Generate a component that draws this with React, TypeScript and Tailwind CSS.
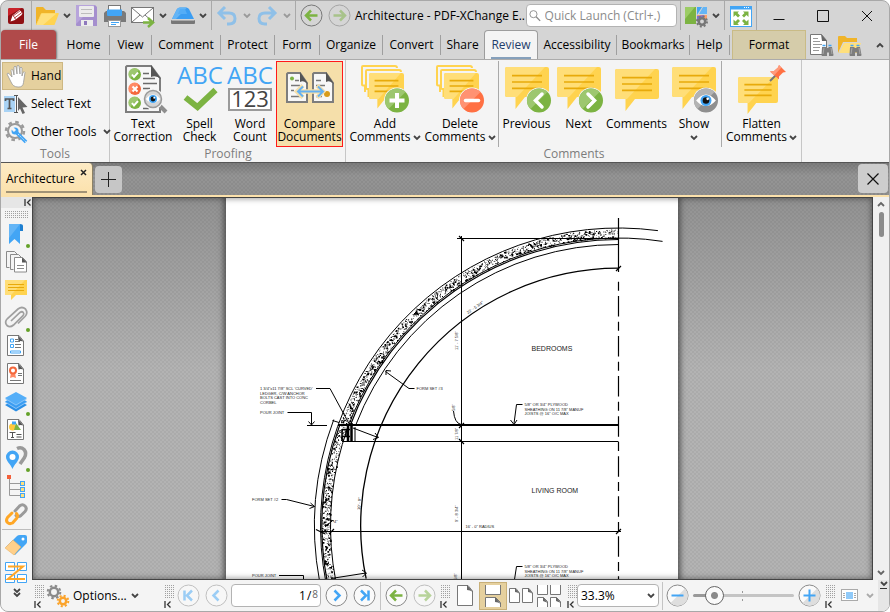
import React from 'react';
import type { ReactNode } from 'react';

const BLUE = '#42a5f5';
const LIGHT_BLUE = '#90caf9';
const GREEN = '#7cb342';
const GREY = '#9a9a9a';

/* ---------- small shared parts ---------- */

function Chevron({ color = '#444' }: { color?: string }) {
  return (
    <svg width="8" height="6" viewBox="0 0 8 6" className="shrink-0" aria-hidden="true">
      <path d="M1 1l3 3 3-3" fill="none" stroke={color} strokeWidth="1.800" />
    </svg>
  );
}

function DropButton({ label, color }: { label: string; color?: string }) {
  return (
    <button aria-label={label} className="flex h-6 w-[10px] shrink-0 items-center justify-center">
      <Chevron color={color} />
    </button>
  );
}

function Divider() {
  return <span className="w-px shrink-0 self-stretch bg-[#a9a9a9]" />;
}

function ToolButton({ label, wide, children }: { label: string; wide?: boolean; children: ReactNode }) {
  return (
    <button aria-label={label} className={`flex h-6 shrink-0 items-center justify-center ${wide ? 'w-[26px]' : 'w-6'}`}>
      {children}
    </button>
  );
}

function Icon({ size = 24, children }: { size?: number; children: ReactNode }) {
  return (
    <svg width={size} height={size} viewBox={`0 0 ${size} ${size}`} fill="none" className="shrink-0 overflow-visible" aria-hidden="true">
      {children}
    </svg>
  );
}

function CircleIcon({ kind, faded, shade = '#8a8a8a' }: { kind: string; faded?: boolean; shade?: string }) {
  const paths: Record<string, string> = {
    first: 'M7.5 6.5v10M15 6.5l-5 5 5 5',
    prev: 'M13.5 6.5l-5 5 5 5',
    next: 'M9.5 6.5l5 5-5 5',
    last: 'M8 6.5l5 5-5 5M15.5 6.5v10',
    back: 'M17.5 11.5h-11M11 6.5l-5 5 5 5',
    forward: 'M5.5 11.5h11M12 6.5l5 5-5 5',
    minus: 'M5.5 11.5h12',
    plus: 'M5.5 11.5h12M11.5 5.5v12',
  };
  const green = kind === 'back' || kind === 'forward';
  const zoom = kind === 'minus' || kind === 'plus';
  return (
    <svg width="23" height="23" viewBox="0 0 23 23" fill="none" className={faded ? 'opacity-50' : ''} aria-hidden="true">
      <circle cx="11.5" cy="11.5" r="10.5" stroke={shade} fill={green && shade !== '#8a8a8a' ? 'none' : '#fafafa'} />
      {zoom && <path d="M19 4.500A10 10 0 0 1 4.500 19Z" fill="#dedede" />}
      <path d={paths[kind]} stroke={green ? GREEN : BLUE} strokeWidth={zoom ? 2 : 2.5} />
    </svg>
  );
}

/* ---------- title bar ---------- */

function Logo() {
  return (
    <svg width="16" height="16" viewBox="0 0 16 16" aria-hidden="true">
      <rect width="16" height="16" rx="2" fill="#8f1014" />
      <path d="M2 0h12L0 8V2a2 2 0 0 1 2-2z" fill="#c8232a" />
      <path d="M2.500 13.500l2-6L11.500 2l1.500 1.500L14.500 5l-1 2-6.500 5z" fill="#fff" />
      <path d="M5 8l7.500-5.500M6.500 10l8-6M4.500 7.500q2.500 1 3 4" stroke="#a81a1f" strokeWidth=".8" fill="none" />
    </svg>
  );
}

function FolderIcon() {
  return (
    <Icon>
      <path d="M1 21V4q0-1 1-1h6l3 3h9v4H6z" fill="#f0b429" />
      <path d="M1 21l5-11.500q.4-.5 1-.5h16q1 0 .7 1l-4 10.500q-.2.5-1 .5z" fill="#ffd350" />
      <path d="M1.500 21L6.500 9.500h15L8 21z" fill="#ffe07c" />
    </Icon>
  );
}

function SaveIcon() {
  return (
    <Icon>
      <path d="M2 1h18l2 2v19H2q-1 0-1-1V2q0-1 1-1z" fill="#a58fce" />
      <path d="M1 2q0-1 1-1h18L1 20z" fill="#b7a4db" />
      <rect x="4" y="2" width="15" height="11" rx="1" fill="#ececec" />
      <path d="M6 5.500h11M6 9.500h11" stroke="#bdbdbd" />
      <rect x="6" y="16" width="12" height="6" fill="#ececec" />
      <rect x="9" y="17" width="3" height="4" fill="#8f79bd" />
    </Icon>
  );
}

function PrintIcon() {
  return (
    <Icon>
      <rect x="5.500" y="1.500" width="12" height="6" fill="#fff" stroke="#777" />
      <path d="M3 7h18l2 2v9H1V9z" fill="#7a7a7a" />
      <path d="M4 5.500h15v5.500q0 1-1 1H5q-1 0-1-1z" fill={BLUE} />
      <rect x="5.500" y="16.500" width="12" height="6" fill="#fff" stroke="#999" />
      <path d="M8 18.500h8M8 20.500h5" stroke={BLUE} />
    </Icon>
  );
}

function MailIcon() {
  return (
    <Icon>
      <rect x=".5" y="3.500" width="22" height="15" fill="#fff" stroke="#777" />
      <path d="M1 4l10.500 9L22 4M1 18l8-7M22 18l-8-7" stroke="#777" />
      <path d="M12 18.500h10M17 14l5 4.500-5 4.500" stroke={GREEN} strokeWidth="2.500" />
    </Icon>
  );
}

function ScannerIcon() {
  return (
    <Icon>
      <path d="M6 5q1-1.500 3-1.500h6q2 0 3 1.500l5 10H1z" fill="#3b9df2" />
      <path d="M6 5q1-1.500 3-1.500h7L5 15H1z" fill="#64b5f6" />
      <path d="M9 5h5l2 5H7z" fill="#54adf7" />
      <rect y="16" width="24" height="4" rx="1" fill="#777" />
      <path d="M1 16.500h22" stroke="#aaa" />
    </Icon>
  );
}

function UndoIcon({ flip }: { flip?: boolean }) {
  return (
    <svg width="22" height="22" viewBox="0 0 22 22" fill="none" className={flip ? '-scale-x-100' : ''} aria-hidden="true">
      <path d="M9 2L3 8l6 6M3.500 8H13q6 0 6 5.500T13 19h-2" stroke="#8fc0e8" strokeWidth="3" />
    </svg>
  );
}

function UiOptionsIcon() {
  return (
    <Icon>
      <path d="M1 3h11v17H1z" fill="#7cb342" />
      <path d="M1 3h10L1 15z" fill="#9ccc65" />
      <path d="M13 3h5l-5 8z" fill={BLUE} />
      <path d="M19 3h4v7h-8z" fill="#64b5f6" />
      <path d="M13 11h10v4H13z" fill="#fb9f6a" />
      <path d="M13 12l8-1-8 7z" fill="#7e6fd0" />
      <circle cx="18" cy="17.500" r="3.200" stroke="#777" strokeWidth="2.500" fill="#d5d5d5" />
      <circle cx="18" cy="17.500" r="5" stroke="#777" strokeWidth="2" strokeDasharray="1.963 1.963" />
    </Icon>
  );
}

function FullScreenIcon() {
  return (
    <Icon>
      <rect x="1.500" y="2.500" width="21" height="20" fill="#fff" stroke={BLUE} />
      <path d="M1 2h22v3.500H1z" fill={BLUE} />
      <path d="M15 3.500h6" stroke="#fff" strokeDasharray="1 1" />
      <path d="M4.500 7.500h5.500L8.500 9l2.500 2.500-2 2-2.500-2.500L4.500 13zM19.500 7.500H14l1.500 1.500L13 11.500l2 2 2.500-2.500 2 2zM4.500 21h5.500l-1.500-1.500L11 17l-2-2-2.500 2.500-2-2zM19.500 21H14l1.500-1.500L13 17l2-2 2.500 2.500 2-2z" fill={GREEN} />
    </Icon>
  );
}

function TitleBar() {
  return (
    <header className="flex h-[29px] shrink-0 items-center">
      <div className="flex min-w-0 flex-1 items-center gap-[3px] self-stretch pr-[2px]">
        <span className="flex w-[31px] shrink-0 items-center justify-center self-stretch border-r border-[#a9a9a9]">
          <Logo />
        </span>
        <ToolButton label="Open"><FolderIcon /></ToolButton>
        <DropButton label="Open recent" />
        <ToolButton label="Save"><SaveIcon /></ToolButton>
        <ToolButton label="Print" wide><PrintIcon /></ToolButton>
        <ToolButton label="Email"><MailIcon /></ToolButton>
        <DropButton label="Email options" />
        <ToolButton label="Scan"><ScannerIcon /></ToolButton>
        <DropButton label="Scan options" />
        <Divider />
        <ToolButton label="Undo"><UndoIcon /></ToolButton>
        <DropButton label="Undo history" color="#9a9a9a" />
        <ToolButton label="Redo"><UndoIcon flip /></ToolButton>
        <DropButton label="Redo history" color="#9a9a9a" />
        <Divider />
        <ToolButton label="Back"><CircleIcon kind="back" shade="#777" /></ToolButton>
        <ToolButton label="Forward" wide><CircleIcon kind="forward" shade="#777" faded /></ToolButton>
        <h1 className="min-w-0 flex-1 whitespace-nowrap">Architecture - PDF-XChange E..</h1>
        <label className="flex h-[23px] w-[151px] shrink-0 items-center gap-1 rounded-sm border border-[#b3b3b3] bg-white px-[2px]">
          <svg width="13" height="13" viewBox="0 0 13 13" fill="none" aria-hidden="true">
            <circle cx="5" cy="5" r="4" stroke="#888" />
            <path d="M8 8l4.500 4.500" stroke="#888" strokeWidth="1.500" />
          </svg>
          <input aria-label="Quick Launch" placeholder="Quick Launch (Ctrl+.)" className="w-full min-w-0 bg-transparent outline-none placeholder:text-[#8b8b8b]" />
        </label>
        <Divider />
        <ToolButton label="UI options"><UiOptionsIcon /></ToolButton>
        <DropButton label="UI options menu" />
        <Divider />
        <ToolButton label="Full screen" wide><FullScreenIcon /></ToolButton>
      </div>
      <div className="flex h-full shrink-0 border-l border-[#a9a9a9]">
        {[
          ['Minimize', 'M.5 10.500h11'],
          ['Maximize', 'M.5 1.500h11v11H.5z'],
          ['Close', 'M1 2l10 10M11 2L1 12'],
        ].map(([name, d]) => (
          <button key={name} aria-label={name} className="flex w-11 items-center justify-center">
            <svg width="12" height="13" viewBox="0 0 12 13" fill="none" stroke="#111" strokeWidth="1" aria-hidden="true"><path d={d} /></svg>
          </button>
        ))}
      </div>
    </header>
  );
}

/* ---------- ribbon tabs ---------- */

function Binoculars() {
  return (
    <g>
      <path d="M13 14h4l1 1h1l1-1h3l1.500 8q0 1-1 1H20v-3.500h-2V23h-4.500q-1 0-1-1z" fill="#7d7d7d" />
      <path d="M13.500 12.500h3M19.500 12.500h3" stroke={BLUE} strokeWidth="1.500" />
      <path d="M15 15l-1 6M22 15l1 6" stroke="#a8a8a8" />
    </g>
  );
}

const tabs: [string, string, boolean][] = [
  ['Home', 'w-[52px]', true],
  ['View', 'w-[42px]', true],
  ['Comment', 'w-[69px]', true],
  ['Protect', 'w-[54px]', true],
  ['Form', 'w-[45px]', true],
  ['Organize', 'w-[63px]', true],
  ['Convert', 'w-[58px]', true],
  ['Share', 'w-[43px]', false],
];

const tabsAfter: [string, string, boolean][] = [
  ['Accessibility', 'w-[79px]', true],
  ['Bookmarks', 'w-[73px]', true],
  ['Help', 'w-[40px]', true],
];

function RibbonTab({ name, width, line }: { name: string; width: string; line: boolean }) {
  return (
    <button role="tab" aria-selected="false" className={`flex h-[20px] shrink-0 items-center justify-center whitespace-nowrap ${width} ${line ? 'border-r border-[#9f9f9f]' : ''}`}>
      {name}
    </button>
  );
}

function RibbonTabs() {
  return (
    <nav role="tablist" className="flex h-[29px] shrink-0 items-center">
      <button role="tab" aria-selected="false" className="h-full w-[55px] shrink-0 rounded-t bg-[#b04a4a] text-white shadow-[1px_0_2px_#777]">File</button>
      <span className="w-[2px]" />
      {tabs.map(([name, width, line]) => <RibbonTab key={name} name={name} width={width} line={line} />)}
      <button role="tab" aria-selected="true" className="flex h-[30px] w-[54px] shrink-0 flex-col items-center justify-end rounded-t border border-b-0 border-[#9d9d9d] bg-[#f4f4f4] pb-px text-[#1f3d6b]">
        <span>Review</span>
        <span className="mt-1 h-[2px] w-10 bg-[#86a0bb]" />
      </button>
      {tabsAfter.map(([name, width, line]) => <RibbonTab key={name} name={name} width={width} line={line} />)}
      <span className="w-[2px]" />
      <button role="tab" aria-selected="false" className="h-full w-[74px] shrink-0 border border-b-0 border-[#c9bb86] bg-[#d5ccaa]">Format</button>
      <span className="flex-1" />
      <button aria-label="Find" className="ml-[3px]">
        <Icon>
          <path d="M1.500 1.500h11l5 6v14h-16z" fill="#fff" stroke="#777" />
          <path d="M12 1l6 7h-5z" fill="#666" />
          <path d="M4 5.500h5M4 8.500h7M4 11.500h9M4 14.500h7M4 17.500h6" stroke="#999" />
          <Binoculars />
        </Icon>
      </button>
      <button aria-label="Search" className="ml-1">
        <Icon>
          <path d="M1 20V4q0-1 1-1h6l2 2h10v4H6z" fill="#f0b429" />
          <path d="M2 20l5-10h17l-4 10z" fill="#ffe07c" />
          <Binoculars />
        </Icon>
      </button>
      <button aria-label="Collapse ribbon" className="flex w-7 items-center justify-center pl-[10px]">
        <span className="rotate-180"><Chevron /></span>
      </button>
    </nav>
  );
}

/* ---------- ribbon icons ---------- */

function Bubble({ x, y, w = 44, h = 30 }: { x: number; y: number; w?: number; h?: number }) {
  const s = w / 44;
  return (
    <g transform={`translate(${x} ${y})`}>
      <path d={`M2 0H${w - 2}q2 0 2 2V${h - 2}q0 2-2 2H${20 * s}L${10.5 * s} ${h + 12 * s}V${h}H2q-2 0-2-2V2q0-2 2-2z`} fill="#ffd34f" />
      <path d={`M2 0H${w - 4 * s}L${12 * s} ${h}H2q-2 0-2-2V2q0-2 2-2z`} fill="#ffde78" />
      <path d={`M${7 * s} ${h * 0.29}H${37 * s}M${7 * s} ${h * 0.5}H${37 * s}M${7 * s} ${h * 0.71}H${37 * s}`} stroke="#e8aa0a" strokeWidth="1.700" />
    </g>
  );
}

function BubbleStack() {
  return (
    <g>
      <path d="M4 27V20.500H2q-1 0-1-1V2q0-1 1-1h32q2 0 2 2" stroke="#ffd34f" strokeWidth="2" />
      <path d="M7.500 32V24H6q-1 0-1-1V6q0-1 1-1h32q2 0 2 2" stroke="#ffd34f" strokeWidth="2" />
      <Bubble x={8} y={8} w={35} h={26} />
    </g>
  );
}

function Badge({ kind }: { kind: 'add' | 'delete' | 'prev' | 'next' }) {
  const d = {
    add: 'M36 28v15M28.500 35.500h15',
    delete: 'M29.500 35.500h13',
    prev: 'M39 29l-6.500 6.500L39 42',
    next: 'M33 29l6.500 6.500L33 42',
  }[kind];
  const red = kind === 'delete';
  return (
    <g>
      <circle cx="36" cy="35.500" r="13" fill="#f4f4f4" />
      <circle cx="36" cy="35.500" r="12" fill={red ? '#ff7043' : '#7cb342'} />
      <path d="M44.500 27A12 12 0 1 0 27.500 44z" fill={red ? '#ff9272' : '#9dc76f'} />
      <path d={d} stroke="#fff" strokeWidth={kind === 'add' ? 4 : 3.5} strokeLinecap={kind === 'add' ? 'butt' : 'round'} />
    </g>
  );
}

function Eye({ cx, cy, s = 1 }: { cx: number; cy: number; s?: number }) {
  return (
    <g transform={`translate(${cx} ${cy}) scale(${s})`}>
      <path d="M-9 0Q0-11 9 0Q0 10-9 0z" fill="#fff" />
      <circle r="5" fill={BLUE} />
      <circle r="3" fill="#111" />
      <circle cx="1.500" cy="-1.500" r="1.200" fill="#fff" />
    </g>
  );
}

function DocSheet({ x, y, w, h, fold = 8 }: { x: number; y: number; w: number; h: number; fold?: number }) {
  return (
    <g transform={`translate(${x} ${y})`}>
      <path d={`M2 1H${w - fold}L${w - 1} ${fold + 3}V${h - 1}H1V2z`} fill="#f7f7f7" stroke="#7d7d7d" strokeWidth="2" />
      <path d={`M${w - fold} 0L${w} ${fold + 4}Q${w - fold / 2} ${fold} ${w - fold} ${fold + 2}z`} fill="#555" />
    </g>
  );
}

function TextCorrectionIcon() {
  return (
    <Icon size={48}>
      <DocSheet x={6} y={0} w={36} h={48} fold={10} />
      <path d="M24 8.500h6M24 13.500h12M24 18.500h14M24 23.500h7M24 43.500h6" stroke="#6a6a6a" strokeWidth="1.300" />
      {[9.5, 24, 38].map((cy, i) => (
        <g key={cy} transform={`translate(16 ${cy})`}>
          <circle r="6" fill={i === 1 ? '#f4683c' : '#7cb342'} />
          <path d="M4-4.500A6 6 0 1 0-5 4z" fill={i === 1 ? '#ff8a65' : '#9dc76f'} />
          <path d={i === 1 ? 'M-2.500-2.500l5 5M2.500-2.500l-5 5' : 'M-3 0l2 2.500 4-4.500'} stroke="#fff" strokeWidth="2" />
        </g>
      ))}
      <path d="M39 39l8 8" stroke="#8e8e8e" strokeWidth="4" />
      <circle cx="34" cy="34" r="9" fill="#d4d4d4" stroke="#f4f4f4" strokeWidth="3" />
      <circle cx="34" cy="34" r="8.500" fill="#d4d4d4" stroke="#9a9a9a" strokeWidth="1.500" />
      <Eye cx={34} cy={34} s={0.8} />
    </Icon>
  );
}

function SpellIcon() {
  return (
    <Icon size={48}>
      <text x="24" y="19" textAnchor="middle" fontSize="24" fill={BLUE}>ABC</text>
      <path d="M9.500 32.500l12 9.500L39.500 25" stroke={GREEN} strokeWidth="6" />
    </Icon>
  );
}

function WordCountIcon() {
  return (
    <Icon size={48}>
      <text x="24" y="19" textAnchor="middle" fontSize="24" fill={BLUE}>ABC</text>
      <rect x="3" y="24" width="42" height="21" fill="#fff" stroke={GREY} strokeWidth="2" />
      <text x="24" y="42" textAnchor="middle" fontSize="22" fill="#444">123</text>
    </Icon>
  );
}

function CompareIcon() {
  return (
    <Icon size={48}>
      <DocSheet x={0} y={7} w={22} h={31} />
      <DocSheet x={26} y={7} w={22} h={31} />
      <path d="M9 15.500h4M5 20.500h9M5 25.500h3M5 31.500h10M30 15.500h5M30 20.500h9M30 31.500h6" stroke="#777" strokeWidth="1.500" />
      <circle cx="6" cy="13.500" r="2" fill={GREEN} />
      <circle cx="41" cy="29" r="3" fill="#d89c1c" />
      <path d="M12 26.500h25M17 20.500l-6 6 6 6M31 20.500l6 6-6 6" stroke="#f5dfaa" strokeWidth="4.500" />
      <path d="M12 26.500h25M17 21.500l-5 5 5 5M32 21.500l5 5-5 5" stroke="#64b1f2" strokeWidth="2" />
    </Icon>
  );
}

function CommentBadgeIcon({ kind }: { kind: 'prev' | 'next' }) {
  return <Icon size={48}><Bubble x={2} y={2} /><Badge kind={kind} /></Icon>;
}

function ShowIcon() {
  return (
    <Icon size={48}>
      <Bubble x={2} y={2} />
      <circle cx="36" cy="35.500" r="13" fill="#f4f4f4" />
      <circle cx="36" cy="35.500" r="12" fill="#8f8f8f" />
      <path d="M44.500 27A12 12 0 1 0 27.500 44z" fill="#b3b3b3" />
      <Eye cx={36} cy={35.5} s={1.1} />
    </Icon>
  );
}

function FlattenIcon() {
  return (
    <Icon size={48}>
      <Bubble x={0} y={12} w={40} h={26} />
      <path d="M32 16l6-6" stroke="#777" strokeWidth="2" />
      <path d="M41 0l7 7-3 .500-4 4 0 3-9-8 4-.500 4-3.500z" fill="#ff7043" />
      <path d="M41 0l2.500 2.500-7.500 8-4-4 4-.5 4-3.500z" fill="#ff9a7b" />
    </Icon>
  );
}

/* ---------- ribbon ---------- */

function BigButton({ icon, lines, width, drop, active }: { icon: ReactNode; lines: string[]; width: string; drop?: boolean; active?: boolean }) {
  return (
    <button className={`flex h-[86px] shrink-0 flex-col items-center whitespace-nowrap border pt-[3px] leading-[13px] ${width} ${active ? 'border-[#ff1a1a] bg-[#f5dfaa]' : 'border-transparent'}`}>
      {icon}
      <span className="mt-[4px]">{lines[0]}</span>
      {lines[1] !== undefined && (
        <span className="flex items-center gap-[2px]">
          {lines[1]}
          {drop && <span className="flex h-[13px] items-center pt-[2px]"><Chevron /></span>}
        </span>
      )}
    </button>
  );
}

function Group({ title, children, className }: { title: string; children: ReactNode; className: string }) {
  return (
    <section aria-label={title} className={`flex shrink-0 flex-col border-r border-[#c6c6c6] pt-px ${className}`}>
      <div className="flex h-[86px]">{children}</div>
      <p className="text-center leading-[14px] text-[#7c7c7c]">{title}</p>
    </section>
  );
}

function Ribbon() {
  return (
    <div className="flex h-[104px] shrink-0 border-t border-b border-t-[#ababab] border-b-[#555] bg-[#f4f4f4]">
      <Group title="Tools" className="w-[109px]">
        <div className="flex w-full flex-col items-start pl-px pt-px whitespace-nowrap">
          <button className="flex h-7 w-[61px] items-center gap-[2px] border border-[#cdb782] bg-[#e5d09e] pl-[2px]">
            <Icon>
              <path d="M7 13L4 9.500q-1.500-1-2 .5l4 8q2 5 7 5h1q4 0 4.500-4.500L20 8.500q-.5-1.500-2 0L17 12V4q-1-2-2 0v6l-1-8q-1-1.500-2 0v8l-1-7q-1-2-2 0v8l-1-5q-1.500-1.500-2 .5z" fill="#fff" stroke="#999" strokeWidth=".8" />
            </Icon>
            Hand
          </button>
          <button className="flex h-7 items-center gap-[3px] pl-[2px]">
            <Icon>
              <path d="M0 4h11v16H0z" fill="#a9d3f5" />
              <path d="M1.500 9V7h8v2M5.500 7v9M3.500 16.500h4" stroke="#555" strokeWidth="1.700" />
              <path d="M10 3.500h4M10 20.500h4M12.500 4v16" stroke="#555" />
              <path d="M14 5l9.500 10-5 .5 2.500 5.500-2.500 1-2.500-5.500-2 2.500z" fill="#666" />
            </Icon>
            Select Text
          </button>
          <button className="flex h-7 items-center gap-[3px] pl-[2px]">
            <Icon>
              <circle cx="11" cy="11" r="7" stroke={GREY} strokeWidth="2" />
              <circle cx="11" cy="11" r="9" stroke={GREY} strokeWidth="2.500" strokeDasharray="3.530 3.530" />
              <circle cx="11" cy="11" r="3.500" fill={BLUE} />
              <path d="M7 7l4 4" stroke="#f4f4f4" strokeWidth="3" />
              <path d="M13 13l9 9" stroke={BLUE} strokeWidth="3.500" />
              <path d="M14 14l8 8" stroke="#bfe0fb" strokeDasharray="1.500 1" />
            </Icon>
            Other Tools
            <span className="ml-[3px]"><Chevron /></span>
          </button>
        </div>
      </Group>
      <Group title="Proofing" className="w-[236px] pl-px">
        <BigButton icon={<TextCorrectionIcon />} lines={['Text', 'Correction']} width="w-16" />
        <BigButton icon={<SpellIcon />} lines={['Spell', 'Check']} width="w-[49px]" />
        <BigButton icon={<WordCountIcon />} lines={['Word', 'Count']} width="w-[52px]" />
        <BigButton icon={<CompareIcon />} lines={['Compare', 'Documents']} width="w-[67px]" active />
      </Group>
      <Group title="Comments" className="w-[456px] pl-px">
        <BigButton icon={<Icon size={48}><BubbleStack /><Badge kind="add" /></Icon>} lines={['Add', 'Comments']} width="w-[76px]" drop />
        <BigButton icon={<Icon size={48}><BubbleStack /><Badge kind="delete" /></Icon>} lines={['Delete', 'Comments']} width="w-[74px]" drop />
        <span className="w-px" />
        <Divider />
        <BigButton icon={<CommentBadgeIcon kind="prev" />} lines={['Previous']} width="w-[55px]" />
        <BigButton icon={<CommentBadgeIcon kind="next" />} lines={['Next']} width="w-[49px]" />
        <BigButton icon={<Icon size={48}><Bubble x={2} y={4} /></Icon>} lines={['Comments']} width="w-[67px]" />
        <BigButton icon={<ShowIcon />} lines={['Show', '']} width="w-[48px]" drop />
        <span className="w-[3px]" />
        <Divider />
        <BigButton icon={<FlattenIcon />} lines={['Flatten', 'Comments']} width="w-[79px]" drop />
      </Group>
    </div>
  );
}

/* ---------- document tabs ---------- */

function DocumentTabs() {
  return (
    <div className="flex h-[34px] shrink-0 items-start border-b-2 border-[#fbe1ab] bg-[conic-gradient(#0000000d_25%,transparent_0_50%,#0000000d_0_75%,transparent_0),linear-gradient(#7c7c7c,#959595_40%,#919191)] bg-[size:4px_4px,auto]">
      <div role="tab" aria-selected="true" className="flex h-full w-[92px] flex-col justify-end rounded-tr border-r border-[#8d8266] bg-linear-to-b from-[#fdebc5] to-[#fbe1ab] px-[5px]">
        <div className="flex items-center">
          <span className="flex-1">Architecture</span>
          <button aria-label="Close tab" className="-mt-[14px]">
            <svg width="7" height="7" viewBox="0 0 7 7" aria-hidden="true"><path d="M1 1l5 5M6 1L1 6" stroke="#222" strokeWidth="1.500" /></svg>
          </button>
        </div>
        <span className="mt-[4px] mb-[2px] h-[2px] bg-[#a19376]" />
      </div>
      <button aria-label="New tab" className="mt-[3px] ml-[2px] flex h-[27px] w-[27px] items-center justify-center rounded-sm bg-[#c6c6c6]">
        <svg width="15" height="15" viewBox="0 0 15 15" aria-hidden="true"><path d="M7.500 0v15M0 7.500h15" stroke="#222" /></svg>
      </button>
      <span className="flex-1" />
      <button aria-label="Close document" className="mt-px mr-px flex h-[29px] w-[30px] items-center justify-center rounded-sm bg-[#cdcdcd]">
        <svg width="12" height="12" viewBox="0 0 12 12" aria-hidden="true"><path d="M.5.5l11 11M11.500.5l-11 11" stroke="#111" strokeWidth="1.200" /></svg>
      </button>
    </div>
  );
}

/* ---------- left panel ---------- */

function CollapseMark() {
  return (
    <svg width="7" height="7" viewBox="0 0 7 7" fill="none" stroke="#333" strokeWidth="1.300" aria-hidden="true"><path d="M1 0v7M6.500.5l-3 3 3 3" /></svg>
  );
}

const dots = 'bg-[repeating-linear-gradient(90deg,#f4f4f4_0_1px,transparent_1px_2px),repeating-linear-gradient(#f4f4f4_0_1px,#a0a0a0_1px_2px)]';

function SmallPage({ children }: { children?: ReactNode }) {
  return (
    <g>
      <path d="M3.500 1.500h11.500l4.500 5.500v14.500h-16z" fill="#fff" stroke="#777" strokeLinejoin="round" />
      <path d="M14 1.500l5.500 6q-3-1-5 0z" fill="#555" />
      {children}
    </g>
  );
}

const panes: { name: string; dot?: boolean; art: ReactNode }[] = [
  { name: 'Bookmarks', dot: true, art: <g><path d="M5 2h11v20l-5.500-5-5.500 5z" fill={BLUE} /><path d="M5 2h11L5 16z" fill="#64b5f6" /><path d="M16 2q3 0 3 2v5h-3z" fill="#1e7fd0" /></g> },
  { name: 'Thumbnails', art: <g stroke="#8a8a8a" fill="#f4f4f4"><path d="M2.500 17.500V1.500h8l3 3M2.500 17.500h3M6.500 19.500V4.500h8l3 3M6.500 19.500h3" /><path d="M10.500 7.500h8l4 4v10.500h-12z" fill="#fff" /><path d="M18 7.500v5h5z" fill="#555" stroke="none" /><path d="M13 15.500h7M13 18.500h7" /></g> },
  { name: 'Comments', art: <g transform="translate(1 2)"><path d="M0 0h22v15H11l-5 5v-5H0z" fill="#ffd34f" /><path d="M0 0h20L6 15H0z" fill="#ffde78" /><path d="M3 4.500h16M3 7.500h16M3 10.500h16" stroke="#e8aa0a" /></g> },
  { name: 'Attachments', dot: true, art: <path d="M7 15l9-8.500q2-1.500 3.300 0 1.200 1.500-.3 3.200L9.500 19q-3.500 3-6.500.500-3-3.500.500-7L14 3q4-3 7.500 0 2.800 4-.500 7.500l-7 7" stroke="#a0a0a0" strokeWidth="1.700" /> },
  { name: 'Fields', art: <SmallPage><path d="M6.500 5h3v3h-3zM6.500 10.500h3v3h-3zM6.500 17h10v2h-10z" stroke={BLUE} /><path d="M11 5.500h3M11 7.500h5M11 10.500h6M11 13.500h6" stroke="#777" /></SmallPage> },
  { name: 'Signatures', art: <SmallPage><path d="M7 11l-1 5 3-1 3 1-1-5" fill="#ff8a65" /><circle cx="9" cy="8.500" r="3" fill="#fff" stroke="#f4683c" strokeWidth="2" /><path d="M14 11.500h4M14 13.500h4M6 18.500h11" stroke="#777" /></SmallPage> },
  { name: 'Layers', dot: true, art: <g><path d="M1 15l11-6 11 6-11 6.500z" fill="#2b8fe6" /><path d="M1 12.500l11-6 11 6-11 6.500z" fill="#8cc6f8" /><path d="M1 11.500l11-6 11 6-11 6.500z" fill="#3b9df2" /><path d="M1 9l11-6 11 6-11 6.500z" fill="#8cc6f8" /><path d="M1 8l11-6 11 6-11 6.500z" fill="#54aef8" /></g> },
  { name: 'Content', art: <SmallPage><circle cx="8.500" cy="9" r="3.500" fill="#ffc93c" /><path d="M12 5l5 7H10z" fill={GREEN} /><path d="M8 3.500h4v3H8z" fill={BLUE} /><path d="M5.500 14.500h6M8.500 14.500v5M7 19.500h3M12.500 16.500h5M12.500 19h5" stroke="#555" /></SmallPage> },
  { name: 'Destinations', dot: true, art: <g><path d="M13 2.500q4-2 7 1 3 3.500.500 8L16 18" stroke="#9a9a9a" strokeWidth="3.500" /><path d="M8.500 4.500a6.500 6.500 0 0 1 6.500 6.500c0 4-4.500 7-6.500 12-2-5-6.500-8-6.500-12a6.500 6.500 0 0 1 6.500-6.500z" fill={BLUE} /><circle cx="8.500" cy="11" r="3" fill="#fff" /></g> },
  { name: 'Model tree', art: <g><path d="M5.500 5v16.500H16M5.500 9.500H16M5.500 15.500H16" stroke="#999" /><rect x="3" y="1" width="4" height="4" fill="#f4603a" /><g fill="#ffe07c" stroke={BLUE}><rect x="16.500" y="7.500" width="4" height="4" /><rect x="16.500" y="13.500" width="4" height="4" /><rect x="16.500" y="19.500" width="4" height="4" /></g></g> },
  { name: 'Links', art: <g strokeWidth="3" strokeLinecap="round"><path d="M11 9l4.500-5q3-2.500 5.500 0t0 5.500l-4 4q-2.500 2-5 0" stroke={GREY} /><path d="M8 11l-4.500 4.500q-2 3 0 5t5 .500l4-4.500q2-2.500 0-5" stroke="#ffa726" /></g> },
];

const extraPanes: { name: string; art: ReactNode }[] = [
  { name: 'Tags', art: <g><path d="M2 14L13 3q1-1 3-1h5q2 0 2 2v5q0 1-1 2L11 22z" fill={BLUE} /><path d="M1 15l8-8 8 7-7 8z" fill="#ffd08a" stroke="#e8aa55" strokeWidth=".500" /><circle cx="19" cy="6" r="1.500" fill="#fff" /></g> },
  { name: 'Order', art: <g><path d="M1.500 1.500h9v8h-9zM13.500 1.500h9v8h-9zM1.500 13.500h9v8h-9zM13.500 13.500h9v8h-9z" fill="#fff" stroke={BLUE} /><path d="M4 5.500h15L4 18h17" stroke="#ffa726" strokeWidth="2" /></g> },
];

function PaneButton({ name, dot, art }: { name: string; dot?: boolean; art: ReactNode }) {
  return (
    <button aria-label={name} className="relative flex h-7 w-[30px] shrink-0 items-center justify-center">
      <Icon>{art}</Icon>
      {dot && <span className="absolute right-[1px] bottom-0 h-1 w-1 rounded-full bg-[#64a128]" />}
    </button>
  );
}

function SidePanel() {
  return (
    <aside className="flex w-[31px] shrink-0 flex-col bg-[#f4f4f4]">
      <button aria-label="Collapse panel" className="flex h-[11px] items-center justify-end bg-[#e6e6e6] pr-px"><CollapseMark /></button>
      <span className={`mx-[3px] mt-[2px] mb-[2px] h-2 shrink-0 ${dots}`} />
      {panes.map((p) => <PaneButton key={p.name} {...p} />)}
      <span className="mx-px my-px h-px shrink-0 bg-[#bdbdbd]" />
      {extraPanes.map((p) => <PaneButton key={p.name} {...p} />)}
      <button aria-label="More panes" className="flex flex-col items-center pt-px">
        <Chevron /><span className="-mt-[2px]"><Chevron /></span>
      </button>
    </aside>
  );
}

/* ---------- drawing ---------- */

const CX = 618.5;
const CY = 526;

function polar(r: number, deg: number) {
  const a = (deg * Math.PI) / 180;
  return { x: CX + r * Math.cos(a), y: CY - r * Math.sin(a) };
}

function arc(r: number, from: number, to: number) {
  const a = polar(r, from);
  const b = polar(r, to);
  return `M${a.x.toFixed(2)} ${a.y.toFixed(2)}A${r} ${r} 0 0 ${to > from ? 0 : 1} ${b.x.toFixed(2)} ${b.y.toFixed(2)}`;
}

function concreteStipple() {
  let seed = 7;
  const rand = () => {
    seed = (seed * 16807) % 2147483647;
    return seed / 2147483647;
  };
  let d = '';
  for (let i = 0; i < 1700; i += 1) {
    const p = polar(288.5 + rand() * 8.5, 90 + rand() * 101.5);
    const s = rand() < 0.1 ? 1.7 : 0.5 + rand() * 0.6;
    d += `M${p.x.toFixed(1)} ${p.y.toFixed(1)}h${s.toFixed(1)}v${s.toFixed(1)}h-${s.toFixed(1)}z`;
  }
  return d;
}

const stipple = concreteStipple();

function Note({ x, y, lines }: { x: number; y: number; lines: string[] }) {
  return (
    <text fontSize="4" fill="#222">
      {lines.map((line, i) => <tspan key={line} x={x} y={y + i * 4.7}>{line}</tspan>)}
    </text>
  );
}

function Dim({ x, y, angle = -90, children }: { x: number; y: number; angle?: number; children: string }) {
  return <text fontSize="4" fill="#222" transform={`translate(${x} ${y}) rotate(${angle})`}>{children}</text>;
}

const sheathing = ['5/8" OR 3/4" PLYWOOD', 'SHEATHING ON 11 7/8" MANUF', 'JOISTS @ 16" O/C MAX'];

function Drawing() {
  return (
    <svg width="452" height="382" viewBox="226 197 452 382" fill="none" stroke="#000" role="img" aria-label="Architecture plan" className="font-['Liberation_Sans',Arial,sans-serif]">
      <path d={stipple} fill="#000" stroke="none" />
      <path d={`${arc(298, 82.4, 191)}${arc(288, 81.2, 191)}${arc(281.5, 90, 159)}${arc(304, 159.5, 190.5)}`} />
      <path d={arc(286.5, 90, 159.5)} strokeWidth="1.200" />
      <path d={arc(296.5, 160, 191)} strokeWidth="1.200" />
      <path d={arc(257.8, 90, 191.8)} strokeWidth="1.300" />
      <path d="M332.500 420.500l6.500 2" />

      <path d="M618.500 218v54" strokeWidth="1.200" />
      <path d="M618.500 281.700V579" strokeWidth="1.200" strokeDasharray="9 5.300 20.500 5.250" />
      <path d="M457 238.500h161M461.500 236v343M320 531.500h301M342 441.500h276.500M307 425.500h20" />
      <path d="M338 425h280.500" strokeWidth="2" />

      <path d="M459 236l5 5M616 271l5-5M616 534l5-5M459 428l5-5M459 439l5 5M316 529.500l8 4M329 534l5-5" strokeWidth="1.200" />
      <path d="M316 388.500h14l20 37M287.500 412.500h24v12M308.500 421.500l3 3.500 3-3.500M414.500 388.500h-5.500l-23.500-17M386 375v-4.500l5 .500" />
      <path d="M281.500 499.500h5l28 7M310.500 503l4 3.500-5 2M279 575.500h24.500v4M353 428l25 9.500M375 433l3.500 4.500-5.500 2M331 578.500l35-5.500M362 570l4.500 3-4 4" />
      <path d="M522.500 404.500h-6l-2.500 19M510.500 420l3.500 4.500 3-4.500M522.500 566.500h-6l-2 13M453.500 411q1 12 7.500 13.500" />
      <path d="M342 429.500h8M342 436.500h8M342 429v12M346 431v5" strokeWidth="1.500" />
      <path d="M351.500 423v19M348 425v16" strokeWidth="2.500" />
      <path d="M355 427v14M326 519l8 2" />
      <path d="M325 527l7-6" />

      <g stroke="none">
        <text x="531.500" y="351" fontSize="7" fill="#222">BEDROOMS</text>
        <text x="531.500" y="493" fontSize="7" fill="#222">LIVING ROOM</text>
        <Note x={260} y={390} lines={['1 3/4"x11 7/8" SCL \'CURVED\'', 'LEDGER, C/W ANCHOR', 'BOLTS CAST INTO CONC', 'CORBEL']} />
        <Note x={260} y={414} lines={['POUR JOINT']} />
        <Note x={416.5} y={390} lines={['FORM SET #3']} />
        <Note x={252} y={501} lines={['FORM SET #2']} />
        <Note x={252} y={577} lines={['POUR JOINT']} />
        <Note x={524.5} y={406} lines={sheathing} />
        <Note x={524.5} y={568} lines={sheathing} />
        <Note x={465.5} y={528} lines={["16' - 0\"  RADIUS"]} />
        <Note x={334} y={523} lines={['4"']} />
        <Dim x={458} y={350}>{"11' - 7 5/8\""}</Dim>
        <Dim x={455} y={411}>5/8"</Dim>
        <Dim x={458} y={440}>11 7/8"</Dim>
        <Dim x={458} y={522}>{"9' - 8 3/4\""}</Dim>
        <Dim x={456.5} y={580}>5/8"</Dim>
        <Dim x={360} y={510} angle={-85}>{"10' - 0\""}</Dim>
        <Dim x={468} y={314} angle={-35}>{"22' - 5 3/4\""}</Dim>
      </g>
    </svg>
  );
}

function DocumentView() {
  return (
    <main className="flex min-h-0 flex-1">
      <div className="relative flex min-w-0 flex-1 justify-center overflow-hidden bg-[conic-gradient(#0000000c_25%,transparent_0_50%,#0000000c_0_75%,transparent_0),linear-gradient(#929292,#b3b3b3_45%,#b3b3b3)] bg-[size:4px_4px,auto] pr-px">
        <div className="h-full shrink-0 overflow-hidden bg-white shadow-[0_0_6px_2px_#4a4a4a]">
          <Drawing />
        </div>
        <span className="pointer-events-none absolute inset-0 border border-[#444] shadow-[inset_0_0_6px_#00000080]" />
      </div>
      <div className="flex w-[16px] shrink-0 flex-col items-center justify-between bg-[#f0f0f0] py-[4px]">
        <div className="flex flex-col items-center gap-[5px]">
          <button aria-label="Scroll up" className="rotate-180"><Chevron color="#666" /></button>
          <span className="h-[25px] w-[5px] rounded-full bg-[#8b8b8b]" />
        </div>
        <button aria-label="Scroll down"><Chevron color="#666" /></button>
      </div>
    </main>
  );
}

/* ---------- status bar ---------- */

function Grip() {
  return (
    <span className="flex h-6 w-[10px] shrink-0 flex-col justify-between">
      <span className={`h-[14px] w-full ${dots}`} />
      <CollapseMark />
    </span>
  );
}

function PageShape({ x, y, w, h }: { x: number; y: number; w: number; h: number }) {
  const f = w > 12 ? 5 : 4;
  return (
    <g transform={`translate(${x} ${y})`}>
      <path d={`M.5.5H${w - f}L${w - 0.5} ${f + 1}V${h - 0.5}H.5z`} fill="#fff" stroke="#777" />
      <path d={`M${w - f - 1} 0L${w} ${f + 2}Q${w - 3} ${f} ${w - f - 1} ${f}z`} fill="#666" />
    </g>
  );
}

function StatusBar() {
  return (
    <footer className="flex h-[31px] shrink-0 items-center bg-[#f4f4f4]">
      <div className="flex min-w-0 flex-1 items-center pl-[2px]">
        <Grip />
        <button className="flex h-7 w-[120px] shrink-0 items-center gap-[3px] pl-[2px]">
          <Icon>
            <circle cx="8" cy="8" r="4.200" stroke="#8a8a8a" strokeWidth="2.500" />
            <circle cx="8" cy="8" r="6.300" stroke="#8a8a8a" strokeWidth="2" strokeDasharray="2.474 2.474" />
            <circle cx="17" cy="17" r="3.200" stroke="#fba32b" strokeWidth="2.500" />
            <circle cx="17" cy="17" r="5.300" stroke="#fba32b" strokeWidth="2" strokeDasharray="2.081 2.081" />
          </Icon>
          <span>Options...</span>
          <span className="ml-px"><Chevron /></span>
        </button>
        <Grip />
        <button aria-label="First page" className="ml-[3px]"><CircleIcon kind="first" faded /></button>
        <button aria-label="Previous page" className="ml-[5px]"><CircleIcon kind="prev" faded /></button>
        <label className="ml-[3px] flex h-[23px] w-[90px] shrink-0 items-center rounded-sm border border-[#b3b3b3] bg-white pr-[2px]">
          <input aria-label="Page number" defaultValue="1" className="w-full min-w-0 bg-transparent text-right outline-none" />
          <span className="px-px">/</span>
          <span className="pb-1 text-[10px] text-[#666]">8</span>
        </label>
        <button aria-label="Next page" className="ml-[4px]"><CircleIcon kind="next" /></button>
        <button aria-label="Last page" className="ml-[5px]"><CircleIcon kind="last" /></button>
        <span className="mx-[4px] h-7 w-px bg-[#c4c4c4]" />
        <button aria-label="Previous view"><CircleIcon kind="back" /></button>
        <button aria-label="Next view" className="mr-[4px] ml-[5px]"><CircleIcon kind="forward" faded /></button>
        <Grip />
        <button aria-label="Single page" className="flex h-7 w-[29px] shrink-0 items-center justify-center">
          <svg width="16" height="22" fill="none" aria-hidden="true"><PageShape x={0} y={0} w={16} h={21} /></svg>
        </button>
        <button aria-label="Continuous" aria-pressed="true" className="flex h-7 w-7 shrink-0 items-center justify-center border border-[#c9b078] bg-[#e5d09e]">
          <svg width="16" height="22" fill="none" aria-hidden="true">
            <path d="M.5 0v9.500h15V0" fill="#fff" stroke="#777" />
            <path d="M.5 22V12.500h10l5 5V22" fill="#fff" stroke="#777" />
            <path d="M10 12l6 7q-3-2-6-2z" fill="#666" />
          </svg>
        </button>
        <button aria-label="Two pages" className="flex h-7 w-7 shrink-0 items-center justify-center">
          <svg width="25" height="16" fill="none" aria-hidden="true"><PageShape x={0} y={0} w={11} h={15} /><PageShape x={13} y={0} w={11} h={15} /></svg>
        </button>
        <button aria-label="Two pages continuous" className="mr-[4px] flex h-7 w-7 shrink-0 items-center justify-center">
          <svg width="25" height="22" fill="none" aria-hidden="true">
            <path d="M.5 0v9.500h10V0M13.500 0v9.500h10V0" fill="#fff" stroke="#777" />
            <path d="M.5 22V12.500h6l4 4V22M13.500 22V12.500h6l4 4V22" fill="#fff" stroke="#777" />
            <path d="M6 12l5 6-5-2zM19 12l5 6-5-2z" fill="#666" />
          </svg>
        </button>
        <Grip />
        <div className="relative w-[82px] shrink-0">
          <select aria-label="Zoom" className="block h-[23px] w-full appearance-none rounded-sm border border-[#b3b3b3] bg-white pl-[3px]">
            <option>33.3%</option>
          </select>
          <span className="pointer-events-none absolute inset-y-0 right-[4px] flex items-center"><Chevron /></span>
        </div>
        <span className="mx-[3px] h-7 w-px bg-[#c4c4c4]" />
        <button aria-label="Zoom out"><CircleIcon kind="minus" /></button>
        <div className="mx-[4px] flex min-w-[60px] flex-1 items-center bg-[linear-gradient(#999_0_2px,transparent_2px_8px,#999_8px_10px)] bg-[size:1px_10px] bg-[position:49px_center] bg-no-repeat">
          <input
            type="range"
            aria-label="Zoom level"
            defaultValue={15}
            className="h-5 w-full min-w-0 appearance-none bg-transparent [&::-webkit-slider-runnable-track]:h-[3px] [&::-webkit-slider-runnable-track]:rounded-full [&::-webkit-slider-runnable-track]:bg-[linear-gradient(to_right,#999_22%,#c4c4c4_22%)] [&::-webkit-slider-thumb]:-mt-2 [&::-webkit-slider-thumb]:h-[19px] [&::-webkit-slider-thumb]:w-[19px] [&::-webkit-slider-thumb]:appearance-none [&::-webkit-slider-thumb]:rounded-full [&::-webkit-slider-thumb]:border [&::-webkit-slider-thumb]:border-[#666] [&::-webkit-slider-thumb]:bg-[radial-gradient(#8a8a8a_3px,#fafafa_4px)]"
          />
        </div>
        <button aria-label="Zoom in" className="mr-[4px]"><CircleIcon kind="plus" /></button>
        <Grip />
        <button aria-label="Layout" className="ml-[6px] flex items-center gap-[8px] pr-[4px]">
          <svg width="17" height="13" fill="none" aria-hidden="true">
            <rect x=".5" y=".5" width="16" height="11" fill="#fff" stroke="#aaa" />
            <rect x="5" y="3" width="7" height="7" fill={LIGHT_BLUE} />
            <path d="M2 4.500h2M2 6.500h2M2 8.500h2M13 4.500h2M13 6.500h2M13 8.500h2" stroke="#aaa" />
          </svg>
          <Chevron color="#aaa" />
        </button>
      </div>
      <button aria-label="Toolbar options" className="flex h-full w-[11px] shrink-0 flex-col items-center gap-px bg-[#e6e6e6] pt-px">
        <Chevron />
        <span className="h-px w-[7px] bg-[#333]" />
      </button>
    </footer>
  );
}

export default function App() {
  return (
    <div className="flex h-screen min-h-[400px] flex-col overflow-hidden rounded-lg border border-[#a8a8a8] bg-[#d5d5d5] font-['Open_Sans','Noto_Sans',sans-serif] text-[12px] leading-[16px] text-black">
      <TitleBar />
      <RibbonTabs />
      <Ribbon />
      <DocumentTabs />
      <div className="flex min-h-0 flex-1">
        <SidePanel />
        <div className="flex min-w-0 flex-1 flex-col">
          <DocumentView />
          <StatusBar />
        </div>
      </div>
    </div>
  );
}
